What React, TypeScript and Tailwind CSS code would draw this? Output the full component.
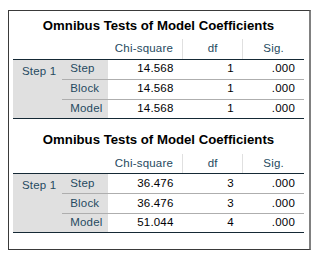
type Row = { label: string; chi: string; df: string; sig: string };

const tables: Row[][] = [
  [
    { label: "Step", chi: "14.568", df: "1", sig: ".000" },
    { label: "Block", chi: "14.568", df: "1", sig: ".000" },
    { label: "Model", chi: "14.568", df: "1", sig: ".000" },
  ],
  [
    { label: "Step", chi: "36.476", df: "3", sig: ".000" },
    { label: "Block", chi: "36.476", df: "3", sig: ".000" },
    { label: "Model", chi: "51.044", df: "4", sig: ".000" },
  ],
];

function OmnibusTable({ rows }: { rows: Row[] }) {
  return (
    <div className="flex flex-col">
      <div className="h-[28px] pt-[1px] flex items-center justify-center text-[13.2px] font-bold text-black">
        Omnibus Tests of Model Coefficients
      </div>
      <table className="border-collapse text-[11.5px] tracking-[0.2px]">
        <colgroup>
          <col className="w-[49px]" />
          <col className="w-[46px]" />
          <col className="w-[74px]" />
          <col className="w-[60px]" />
          <col className="w-[61px]" />
        </colgroup>
        <thead>
          <tr className="h-[20px] text-[#264a60]">
            <th className="border-b border-[#152935]" />
            <th className="border-b border-[#152935]" />
            <th className="border-b border-[#152935] font-normal text-right pr-[9px]">Chi-square</th>
            <th className="border-b border-l border-[#152935] border-l-[#e0e0e0] font-normal text-center">df</th>
            <th className="border-b border-l border-[#152935] border-l-[#e0e0e0] font-normal text-center">Sig.</th>
          </tr>
        </thead>
        <tbody>
          {rows.map((r, i) => {
            const line = i === 2 ? "border-b border-[#152935]" : "border-b border-[#aeaeae]";
            return (
              <tr key={r.label} className={i === 2 ? "h-[19px]" : "h-[20px]"}>
                {i === 0 && (
                  <td
                    rowSpan={3}
                    className="bg-[#e0e0e0] text-[#264a60] align-top pl-[9px] pt-[3px] border-b border-[#152935]"
                  >
                    Step 1
                  </td>
                )}
                <td className={`bg-[#e0e0e0] text-[#264a60] pl-[8px] ${line}`}>{r.label}</td>
                <td className={`text-right pr-[9px] text-[#010205] ${line}`}>{r.chi}</td>
                <td className={`text-right pr-[9px] text-[#010205] ${line}`}>{r.df}</td>
                <td className={`text-right pr-[9px] text-[#010205] ${line}`}>{r.sig}</td>
              </tr>
            );
          })}
        </tbody>
      </table>
    </div>
  );
}

export default function App() {
  return (
    <div className="w-[330px] h-[255px] bg-white pt-[10px] pl-[8px] font-['Liberation_Sans',Arial,sans-serif]">
      <div className="w-[303px] h-[240px] border border-[#3a3a3a] border-r-2 border-r-[#808080] pl-[4px] pr-[5px] flex flex-col gap-[7px]">
        {tables.map((rows, i) => (
          <OmnibusTable key={i} rows={rows} />
        ))}
      </div>
    </div>
  );
}
